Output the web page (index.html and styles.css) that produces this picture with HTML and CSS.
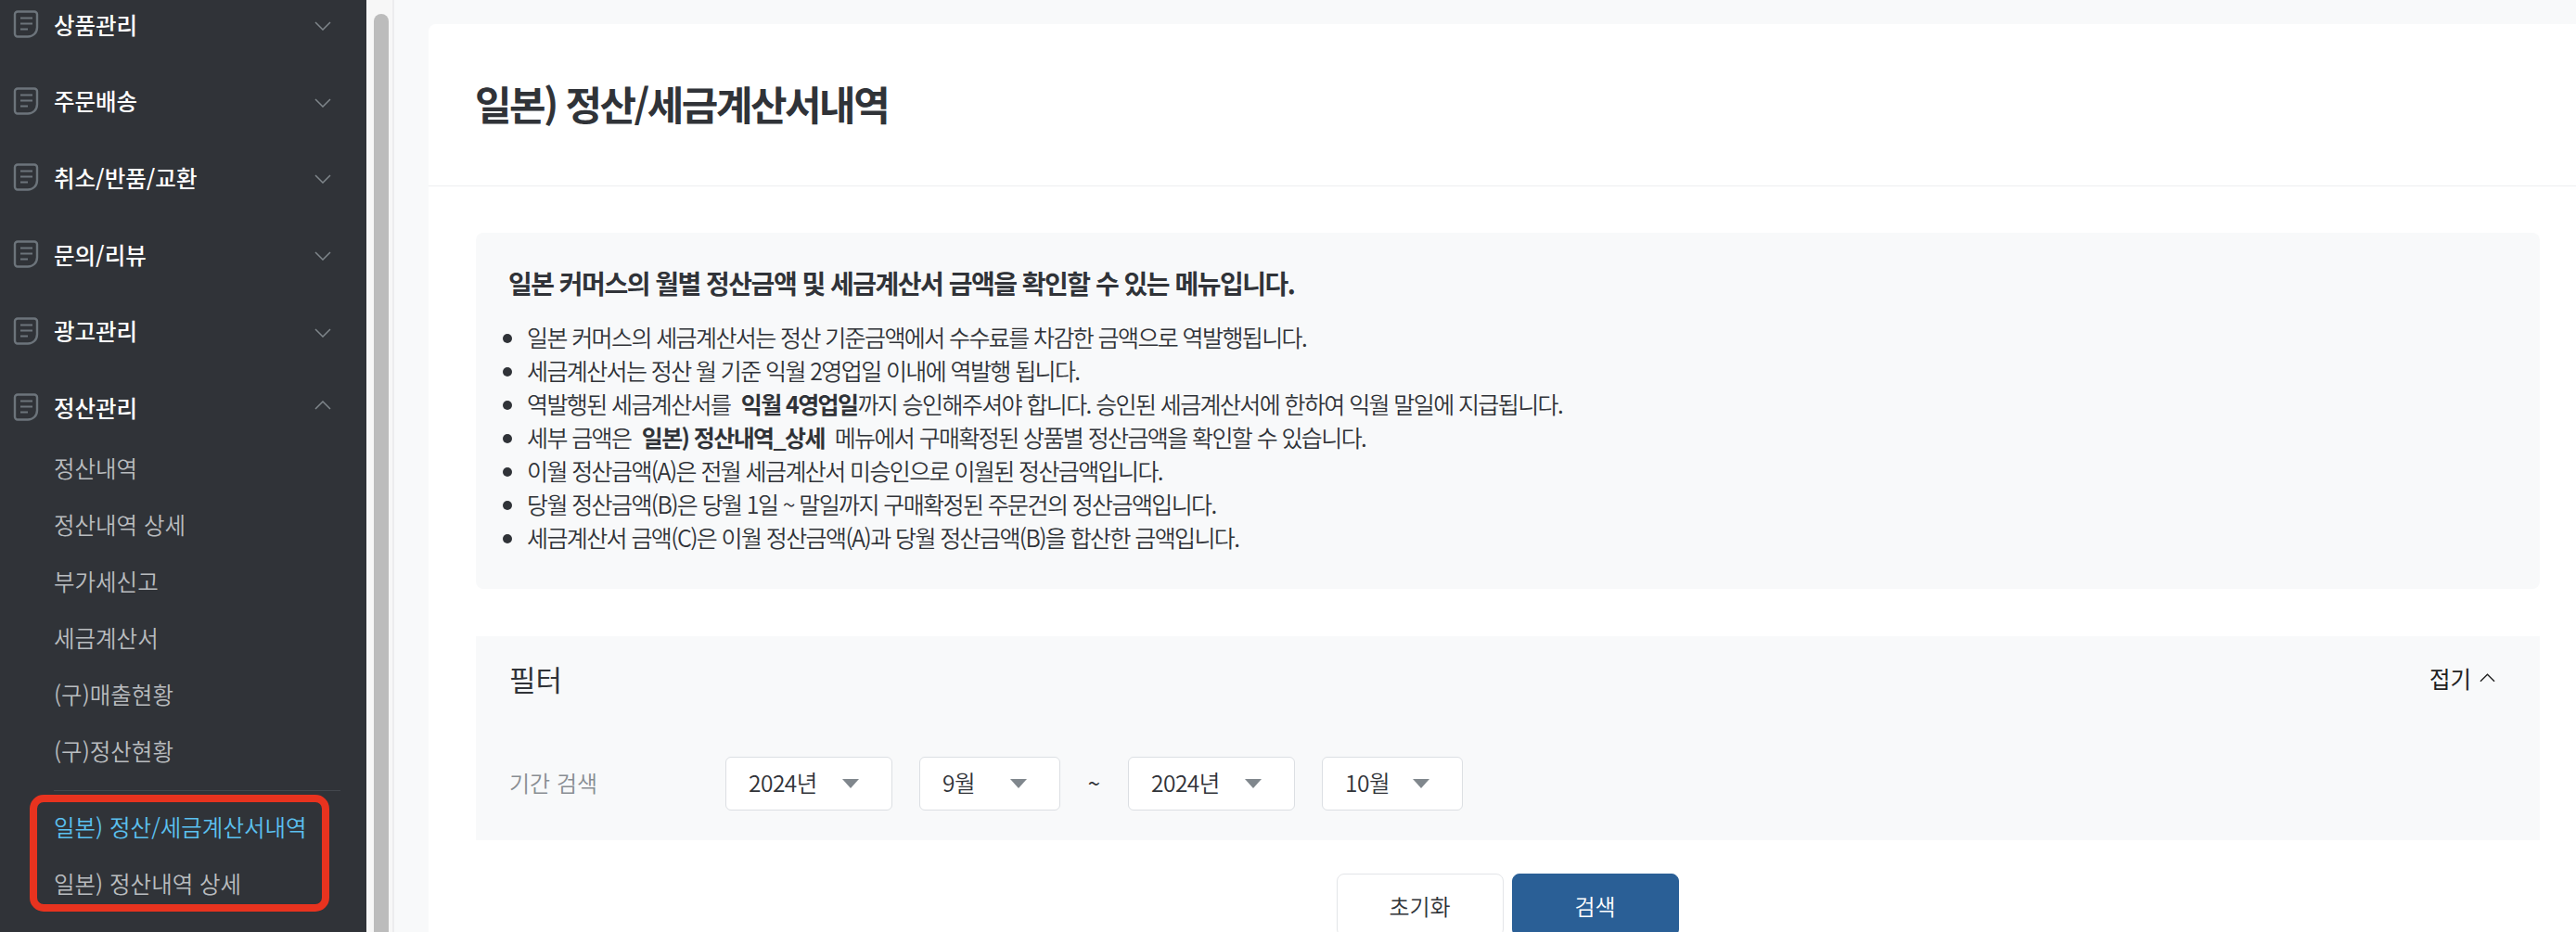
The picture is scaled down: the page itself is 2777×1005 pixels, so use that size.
FILE: index.html
```html
<!DOCTYPE html>
<html lang="ko">
<head>
    <meta charset="utf-8">
    <title>일본) 정산/세금계산서내역</title>
    <link rel="stylesheet" href="styles.css">
</head>
<body>
<svg width="0" height="0" class="defs">
    <symbol id="doc" viewBox="0 0 28 30">
        <path d="M5 1.500h18a3 3 0 0 1 3 3v14c0 6-4.500 10-10 10H5a3 3 0 0 1-3-3v-21a3 3 0 0 1 3-3z" fill="none" stroke="currentColor" stroke-width="2.400"/>
        <path d="M8 8.500h13M8 14.500h13M8 20.500h8" fill="none" stroke="currentColor" stroke-width="2.200"/>
    </symbol>
    <symbol id="chev" viewBox="0 0 18 10">
        <path d="M1 1l8 8 8-8" fill="none" stroke="currentColor" stroke-width="1.500"/>
    </symbol>
</svg>
<aside class="sidebar">
    <nav class="nav">
        <a class="nav-head"><svg class="doc"><use href="#doc"/></svg><span>상품관리</span><svg class="chev"><use href="#chev"/></svg></a>
        <a class="nav-head"><svg class="doc"><use href="#doc"/></svg><span>주문배송</span><svg class="chev"><use href="#chev"/></svg></a>
        <a class="nav-head"><svg class="doc"><use href="#doc"/></svg><span>취소/반품/교환</span><svg class="chev"><use href="#chev"/></svg></a>
        <a class="nav-head"><svg class="doc"><use href="#doc"/></svg><span>문의/리뷰</span><svg class="chev"><use href="#chev"/></svg></a>
        <a class="nav-head"><svg class="doc"><use href="#doc"/></svg><span>광고관리</span><svg class="chev"><use href="#chev"/></svg></a>
        <a class="nav-head open"><svg class="doc"><use href="#doc"/></svg><span>정산관리</span><svg class="chev up"><use href="#chev"/></svg></a>
        <ul class="sub">
            <li>정산내역</li>
            <li>정산내역 상세</li>
            <li>부가세신고</li>
            <li>세금계산서</li>
            <li>(구)매출현황</li>
            <li>(구)정산현황</li>
        </ul>
        <ul class="sub sub-jp">
            <li class="active">일본) 정산/세금계산서내역</li>
            <li>일본) 정산내역 상세</li>
            <li class="highlight"></li>
        </ul>
    </nav>
</aside>
<div class="rail"><div class="thumb"></div></div>
<main class="main">
    <section class="card">
        <header class="card-head">
            <h1>일본) 정산/세금계산서내역</h1>
        </header>
        <div class="card-body">
            <div class="notice">
                <h2>일본 커머스의 월별 정산금액 및 세금계산서 금액을 확인할 수 있는 메뉴입니다.</h2>
                <ul>
                    <li>일본 커머스의 세금계산서는 정산 기준금액에서 수수료를 차감한 금액으로 역발행됩니다.</li>
                    <li>세금계산서는 정산 월 기준 익월 2영업일 이내에 역발행 됩니다.</li>
                    <li>역발행된 세금계산서를 <b>익월 4영업일</b>까지 승인해주셔야 합니다. 승인된 세금계산서에 한하여 익월 말일에 지급됩니다.</li>
                    <li>세부 금액은 <b>일본) 정산내역_상세</b>&nbsp; 메뉴에서 구매확정된 상품별 정산금액을 확인할 수 있습니다.</li>
                    <li>이월 정산금액(A)은 전월 세금계산서 미승인으로 이월된 정산금액입니다.</li>
                    <li>당월 정산금액(B)은 당월 1일 ~ 말일까지 구매확정된 주문건의 정산금액입니다.</li>
                    <li>세금계산서 금액(C)은 이월 정산금액(A)과 당월 정산금액(B)을 합산한 금액입니다.</li>
                </ul>
            </div>
            <form class="filter">
                <div class="filter-top">
                    <h3>필터</h3>
                    <a class="fold">접기 <svg class="fold-chev"><use href="#chev"/></svg></a>
                </div>
                <div class="filter-row">
                    <label>기간 검색</label>
                    <div class="select year">2024년<i></i></div>
                    <div class="select month">9월<i></i></div>
                    <span class="tilde">~</span>
                    <div class="select year">2024년<i></i></div>
                    <div class="select month">10월<i></i></div>
                </div>
            </form>
            <div class="actions">
                <button type="reset" class="btn">초기화</button>
                <button type="submit" class="btn primary">검색</button>
            </div>
        </div>
    </section>
</main>
</body>
</html>
```

FILE: styles.css
```css
* {
    box-sizing: border-box;
}
html, body {
    height: 100%;
}
body {
    margin: 0;
    display: flex;
    height: 1005px;
    overflow: hidden;
    background: #f8f9fa;
    color: #303338;
    font-family: "Noto Sans CJK KR", "Noto Sans", sans-serif;
}
.defs {
    position: absolute;
}

/* sidebar */
.sidebar {
    flex: 0 0 395px;
    background: #303338;
    overflow: hidden;
}
.nav {
    margin-top: -15px;
    padding: 0 28px 0 14px;
}
.nav-head {
    display: flex;
    align-items: center;
    height: 82.6px;
    color: #fff;
    font-size: 24.5px;
    font-weight: 500;
}
.nav-head span {
    flex: 1;
    margin-left: 16px;
}
.doc {
    width: 28px;
    height: 30px;
    color: #6c747b;
}
.chev {
    width: 18px;
    height: 10px;
    margin-top: 4px;
    margin-right: 10px;
    color: #7f868b;
}
.chev.up {
    transform: rotate(180deg);
    margin-top: -4px;
}
.sub {
    list-style: none;
    margin: 0;
    padding: 0;
    margin-left: 44px;
}
.sub li {
    display: flex;
    align-items: center;
    height: 61px;
    color: #b9bcbf;
    font-size: 24.5px;
    font-weight: 350;
}
.sub:first-of-type {
    margin-top: -7px;
}
.sub-jp {
    position: relative;
    margin-top: 12px;
    padding-top: 8px;
    border-top: 1px solid #43474d;
}
.sub .active {
    color: #5bc0ef;
}
.sub .highlight {
    position: absolute;
    left: -26px;
    top: 4px;
    width: 323px;
    height: 126px;
    border: 8px solid #e8331f;
    border-radius: 15px;
}

/* scrollbar */
.rail {
    flex: 0 0 30px;
    background: #f7f7f7;
    border-right: 2px solid #ececee;
    padding: 15px 0 0 8px;
}
.thumb {
    width: 16px;
    height: 1100px;
    border-radius: 8px 8px 0 0;
    background: #bcbcbc;
}

/* content */
.main {
    flex: 1;
    padding: 26px 0 0 37px;
}
.card {
    background: #fff;
    border-radius: 8px 0 0 0;
    height: 1100px;
}
.card-head {
    height: 175px;
    padding: 0 50px 5px;
    display: flex;
    align-items: center;
    border-bottom: 1px solid #edeef0;
}
h1 {
    margin: 0;
    font-size: 43px;
    font-weight: 700;
    letter-spacing: -2.500px;
}
.card-body {
    padding: 50px 39px 0 51px;
}
.notice {
    height: 384px;
    padding: 32px 36px 32px 35px;
    border-radius: 8px;
    background: #f8f9fa;
}
h2 {
    margin: 0 0 18px;
    font-size: 28px;
    line-height: 44px;
    font-weight: 700;
    letter-spacing: -1.500px;
}
.notice ul {
    margin: 0;
    padding: 0 0 0 20px;
    font-size: 25px;
    line-height: 36px;
    font-weight: 350;
    letter-spacing: -1.600px;
}
.notice b {
    margin-left: 6px;
    font-weight: 700;
}
.filter {
    height: 220px;
    margin-top: 51px;
    padding: 0 36px;
    background: #f8f9fa;
}
.filter-top {
    display: flex;
    justify-content: space-between;
    align-items: center;
    height: 90px;
}
h3 {
    margin: 0;
    font-size: 31px;
    font-weight: 400;
}
.fold {
    display: flex;
    align-items: center;
    gap: 9px;
    margin-right: 12px;
    font-size: 24.5px;
    color: #222;
}
.fold-chev {
    width: 17px;
    height: 10px;
    transform: rotate(180deg);
}
.filter-row {
    display: flex;
    align-items: center;
    margin-top: 40px;
}
.filter-row label {
    width: 233px;
    padding-bottom: 4px;
    color: #888d92;
    font-size: 24px;
    font-weight: 350;
}
.select {
    display: flex;
    justify-content: space-between;
    align-items: center;
    height: 58px;
    padding: 0 35px 4px 24px;
    border: 1px solid #dcdfe3;
    border-radius: 6px;
    background: #fff;
    font-size: 24.5px;
    font-weight: 350;
    letter-spacing: -.5px;
}
.select i {
    width: 0;
    height: 0;
    margin-top: 4px;
    border-left: 9px solid transparent;
    border-right: 9px solid transparent;
    border-top: 10px solid #80878d;
}
.year {
    width: 180px;
    margin-right: 29px;
}
.month {
    width: 152px;
}
.tilde {
    width: 73px;
    padding-bottom: 4px;
    text-align: center;
    font-size: 24px;
}
.actions {
    display: flex;
    justify-content: center;
    gap: 9px;
    margin-top: 36px;
    padding-right: 1px;
}
.btn {
    width: 180px;
    height: 68px;
    border: 1px solid #e3e5e8;
    border-radius: 8px;
    background: #fff;
    color: #303338;
    font: 350 24px "Noto Sans CJK KR", sans-serif;
}
.primary {
    background: #2a5f96;
    border-color: #2a5f96;
    color: #fff;
}
```
